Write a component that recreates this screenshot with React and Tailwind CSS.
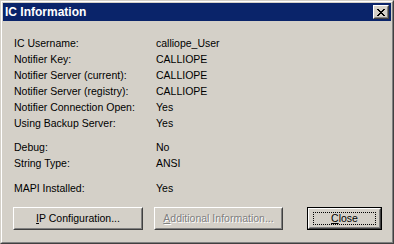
const ROWS_A = [
  ["IC Username:", "calliope_User"],
  ["Notifier Key:", "CALLIOPE"],
  ["Notifier Server (current):", "CALLIOPE"],
  ["Notifier Server (registry):", "CALLIOPE"],
  ["Notifier Connection Open:", "Yes"],
  ["Using Backup Server:", "Yes"]
];

const ROWS_B = [
  ["Debug:", "No"],
  ["String Type:", "ANSI"]
];

const InfoRow = ({ label, value }) => (
  <div className="flex h-[16px] items-center leading-[16px]">
    <span className="w-[142px] shrink-0">{label}</span>
    <span>{value}</span>
  </div>
);

const ClassicButton = ({ width, children, isDefault, disabled }) => {
  const face = (
    <div className="h-full border border-t-white border-l-white border-r-[#404040] border-b-[#404040]">
      <div className="h-full border border-t-[#d4d0c8] border-l-[#d4d0c8] border-r-[#808080] border-b-[#808080] flex items-center justify-center">
        {children}
      </div>
    </div>
  );

  if (isDefault) {
    return (
      <div className={`h-[23px] border border-black ${width}`}>
        {face}
      </div>
    );
  }

  return <div className={`h-[23px] ${width} ${disabled ? "text-[#808080] [text-shadow:1px_1px_0_#ffffff]" : ""}`}>{face}</div>;
};

const CloseGlyph = () => (
  <svg width="8" height="7" viewBox="0 0 8 7" shapeRendering="crispEdges">
    <path
      fill="#000"
      d="M0 0h2v1H0zM6 0h2v1H6zM1 1h2v1H1zM5 1h2v1H5zM2 2h4v1H2zM3 3h2v1H3zM2 4h4v1H2zM1 5h2v1H1zM5 5h2v1H5zM0 6h2v1H0zM6 6h2v1H6z"
    />
  </svg>
);

const App = () => {
  return (
    <div
      className="w-[394px] h-[244px] border border-t-[#d4d0c8] border-l-[#d4d0c8] border-r-[#404040] border-b-[#404040] text-black"
      style={{ fontFamily: '"Liberation Sans", Arial, sans-serif' }}
    >
      <div className="h-full border border-t-white border-l-white border-r-[#808080] border-b-[#808080] bg-[#d4d0c8] p-[1px] flex flex-col">
        <div className="h-[18px] bg-[#0a246a] flex items-center justify-between pl-[2px] pr-[2px]">
          <span className="text-white font-bold text-[12px] leading-none">IC Information</span>
          <div className="w-[16px] h-[14px] border border-t-white border-l-white border-r-[#404040] border-b-[#404040] bg-[#d4d0c8]">
            <div className="h-full border border-t-[#d4d0c8] border-l-[#d4d0c8] border-r-[#808080] border-b-[#808080] flex items-center justify-center">
              <CloseGlyph />
            </div>
          </div>
        </div>

        <div className="flex-1 flex flex-col text-[10.5px]">
          <div className="pt-[14px] pl-[11px]">
            {ROWS_A.map(([label, value]) => (
              <InfoRow key={label} label={label} value={value} />
            ))}
          </div>
          <div className="pt-[8px] pl-[11px]">
            {ROWS_B.map(([label, value]) => (
              <InfoRow key={label} label={label} value={value} />
            ))}
          </div>
          <div className="pt-[9px] pl-[11px]">
            <InfoRow label="MAPI Installed:" value="Yes" />
          </div>

          <div className="mt-[11px] flex pl-[10px]">
            <ClassicButton width="w-[130px]">
              <span><span className="underline">I</span>P Configuration...</span>
            </ClassicButton>
            <div className="ml-[11px]">
              <ClassicButton width="w-[129px]" disabled>
                <span><span className="underline">A</span>dditional Information...</span>
              </ClassicButton>
            </div>
            <div className="ml-[24px]">
              <ClassicButton width="w-[75px]" isDefault>
                <div className="w-[63px] h-[13px] border border-dotted border-black flex items-center justify-center leading-none">
                  <span><span className="underline">C</span>lose</span>
                </div>
              </ClassicButton>
            </div>
          </div>
        </div>
      </div>
    </div>
  );
};

export default App;
